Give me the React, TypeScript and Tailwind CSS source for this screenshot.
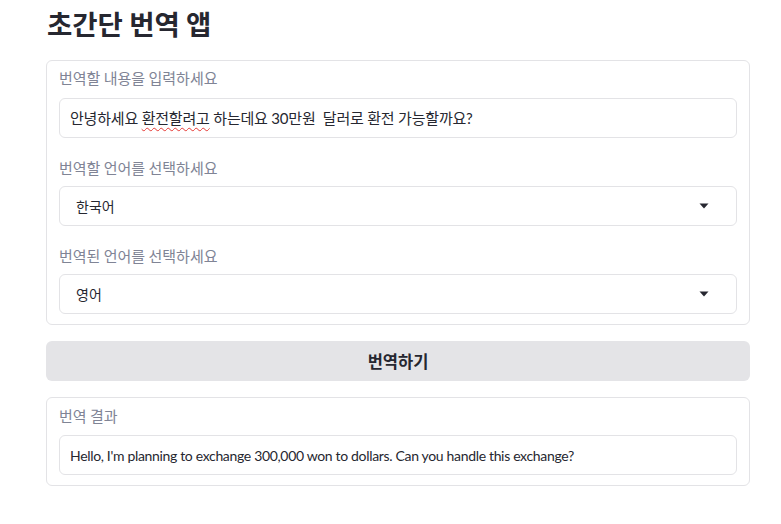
const font = { fontFamily: '"Noto Sans CJK KR", "Noto Sans", sans-serif' };
const mixed = { fontFamily: 'Lato, "Noto Sans CJK KR", sans-serif' };

function Caret() {
  return (
    <svg width="10" height="6" viewBox="0 0 10 6" className="shrink-0">
      <path d="M0.5 0.5 L9.5 0.5 L5 5.5 Z" fill="#262730" />
    </svg>
  );
}

function SelectBox({ value }: { value: string }) {
  return (
    <div className="mt-2 flex h-10 items-center justify-between rounded-md border border-[#e3e3e6] bg-white pl-4 pr-[27px] text-[14px] text-[#262730]">
      <span>{value}</span>
      <Caret />
    </div>
  );
}

export default function App() {
  return (
    <div className="min-h-[524px] bg-white" style={font}>
      <div className="w-[704px] ml-[46px]">
        <h1 className="pt-[5px] pl-[1px] text-[27.5px] leading-[36px] font-bold text-[#262730]">초간단 번역 앱</h1>

        <div className="mt-[19px] rounded-md border border-[#e3e3e6] px-3 pt-[7px] pb-[10px]">
          <p className="h-5 text-[15px] leading-5 text-[#808495]">번역할 내용을 입력하세요</p>
          <div className="mt-[10px] flex h-10 items-center rounded-md border border-[#e3e3e6] px-[10px] text-[15px] tracking-[-0.2px] text-[#262730]" style={mixed}>
            <span className="whitespace-pre">
              안녕하세요{' '}
              <span className="underline decoration-wavy decoration-[#e53935] decoration-1 underline-offset-[3px]">환전할려고</span>
              {' '}하는데요 30만원  달러로 환전 가능할까요?
            </span>
          </div>

          <p className="mt-5 h-5 text-[15px] leading-5 text-[#808495]">번역할 언어를 선택하세요</p>
          <SelectBox value="한국어" />

          <p className="mt-5 h-5 text-[15px] leading-5 text-[#808495]">번역된 언어를 선택하세요</p>
          <SelectBox value="영어" />
        </div>

        <button className="mt-4 flex h-10 w-full items-center justify-center rounded-md bg-[#e4e4e7] text-[16.5px] font-bold text-[#262730]">
          번역하기
        </button>

        <div className="mt-4 rounded-md border border-[#e3e3e6] px-3 pt-2 pb-[10px]">
          <p className="h-5 text-[15px] leading-5 text-[#808495]">번역 결과</p>
          <div className="mt-[9px] flex h-10 items-center rounded-md border border-[#e3e3e6] px-[10px] text-[14px] tracking-[-0.33px] text-[#262730]" style={mixed}>
            Hello, I'm planning to exchange 300,000 won to dollars. Can you handle this exchange?
          </div>
        </div>
      </div>
    </div>
  );
}
